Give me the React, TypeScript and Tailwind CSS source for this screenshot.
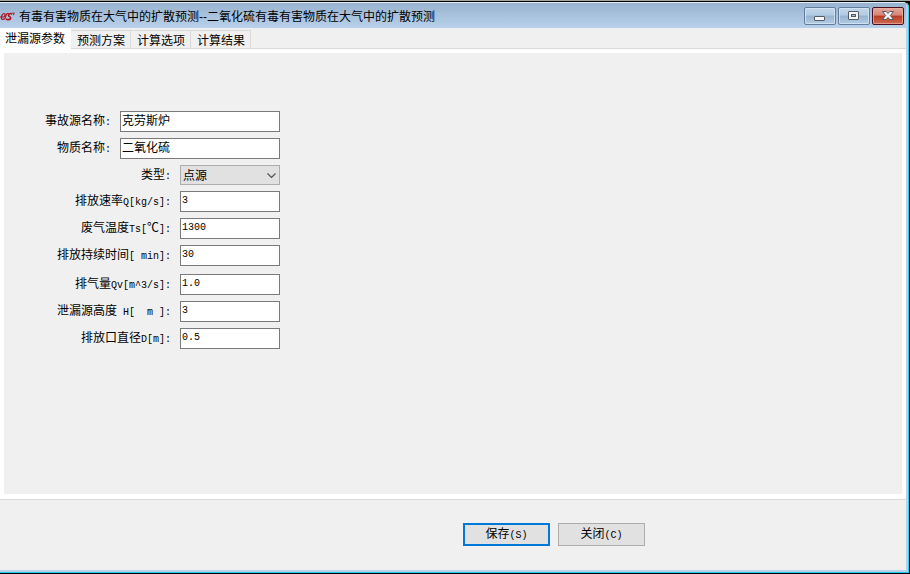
import React, { useState } from 'react';

const TITLE = '有毒有害物质在大气中的扩散预测--二氧化硫有毒有害物质在大气中的扩散预测';

const TABS = ['泄漏源参数', '预测方案', '计算选项', '计算结果'];

type Field = { id: string; label: string; value: string };

const NAME_FIELDS: Field[] = [
  { id: 'source', label: '事故源名称:', value: '克劳斯炉' },
  { id: 'substance', label: '物质名称:', value: '二氧化硫' },
];

const RATE_FIELDS: Field[] = [
  { id: 'rate', label: '排放速率Q[kg/s]:', value: '3' },
  { id: 'temperature', label: '废气温度Ts[℃]:', value: '1300' },
  { id: 'duration', label: '排放持续时间[ min]:', value: '30' },
];

const SIZE_FIELDS: Field[] = [
  { id: 'volume', label: '排气量Qv[m^3/s]:', value: '1.0' },
  { id: 'height', label: '泄漏源高度 H[  m ]:', value: '3' },
  { id: 'diameter', label: '排放口直径D[m]:', value: '0.5' },
];

// Latin runs are set smaller so that two of them fill one Chinese character
const MixedText: React.FC<{ text: string }> = ({ text }) => (
  <>
    {text.split(/([\x20-\x7e]+)/).map((part, i) =>
      i % 2 ? (
        <span key={i} className="font-['Liberation_Mono',monospace] text-[10px]">{part}</span>
      ) : (
        part
      )
    )}
  </>
);

const FieldRow: React.FC<{ field: Field; wide?: boolean }> = ({ field, wide }) => (
  <div className="flex h-[21px] items-start justify-end gap-[9px]">
    <label htmlFor={field.id} className="whitespace-pre leading-5">
      <MixedText text={field.label} />
    </label>
    <input
      id={field.id}
      type="text"
      defaultValue={field.value}
      className={`h-[21px] border border-[#7a7a7a] bg-white px-px outline-none ${
        wide ? 'w-40 pb-1 text-xs' : "w-[100px] pb-[3px] font-['Liberation_Mono','Noto_Sans_CJK_SC',monospace] text-[10px]"
      }`}
    />
  </div>
);

const Logo: React.FC = () => (
  <svg width="15" height="12" viewBox="0 0 15 12" fill="none" stroke="#b0141c" strokeWidth="1.2" aria-hidden="true">
    <path d="M0 6h3.500c1.500-.5 2.200-3.500.6-3.500C2.500 2.500 1 5.300 1.400 7.300c.4 1.600 2.400 1.200 3.600.2" />
    <path d="M4.800 7.800 6.200 3.800c.6-1 1.700-1.300 2.600-.8" />
    <path d="M12.200 3.200c-1.100-1.200-3.600-.6-3.700 1-.1 1.500 2.600 1.400 2.200 3-.4 1.700-3.500 1.900-4.700.7" strokeWidth="1.600" />
    <path d="M12.600 2h1.600l-.8 2.200" strokeWidth="1" />
  </svg>
);

const WindowButton: React.FC<{ name: string; close?: boolean; children: React.ReactNode }> = ({
  name,
  close,
  children,
}) => (
  <button
    type="button"
    aria-label={name}
    className={`flex h-[18px] w-8 items-center justify-center rounded-xs border ring-1 ring-inset ${
      close
        ? 'border-[#4b1020] bg-[linear-gradient(#e5a79d_0%,#d88375_45%,#b93a22_50%,#cf6a50_100%)] ring-[#eab2a8]/70'
        : 'border-[#637d9f] bg-[linear-gradient(#c2d6ea_0%,#b3cbe3_45%,#98b3cf_50%,#b3cde7_100%)] ring-[#dbe8f5]/70'
    }`}
  >
    {children}
  </button>
);

const TitleBar: React.FC = () => (
  <header className="flex h-[26px] shrink-0 items-start border-t border-[#e4edf6] bg-linear-to-b from-[#98b3d0] to-[#b9d1ea] pr-[2px]">
    <div className="flex flex-1 items-center gap-1 pt-1">
      <Logo />
      <h1 className="whitespace-nowrap leading-5">{TITLE}</h1>
    </div>
    <div className="flex gap-[2px] pt-1">
      <WindowButton name="最小化">
        <svg width="12" height="12" viewBox="0 0 12 12" aria-hidden="true">
          <rect x="0.500" y="6.500" width="10" height="4" rx="0.500" fill="#f6f6f6" stroke="#535a68" />
        </svg>
      </WindowButton>
      <WindowButton name="最大化">
        <svg width="12" height="12" viewBox="0 0 12 12" aria-hidden="true">
          <rect x="0.500" y="1.500" width="10" height="8" rx="0.500" fill="#f6f6f6" stroke="#535a68" />
          <rect x="3.500" y="4.500" width="4" height="2" fill="#9fb9d5" stroke="#535a68" />
        </svg>
      </WindowButton>
      <WindowButton name="关闭" close>
        <svg width="12" height="12" viewBox="0 0 12 12" aria-hidden="true">
          <path
            d="M.5 1.500h3.700L6 3.500l1.800-2h3.700L8.300 5.500l3.200 4H7.800L6 7.500l-1.800 2H.5l3.200-4z"
            fill="#f6f6f6"
            stroke="#535a68"
            strokeLinejoin="round"
          />
        </svg>
      </WindowButton>
    </div>
  </header>
);

const App: React.FC = () => {
  const [tab, setTab] = useState(0);

  return (
    <div className="flex min-h-screen flex-col border-t border-[#a3a7a3] bg-black pr-px pb-px font-['Liberation_Sans','Noto_Sans_CJK_SC',sans-serif] text-xs text-black">
      <div className="flex flex-1 flex-col overflow-hidden rounded-tr-md border-t border-r border-b border-t-black border-r-[#2fd0ea] border-b-[#1fc8e6] bg-[#b9d1ea] pr-[2px] pb-[2px]">
        <TitleBar />

        {/* Tabs */}
        <div role="tablist" className="flex h-[21px] shrink-0 border-b border-[#d9d9d9] bg-[#f0f0f0]">
          {TABS.map((name, i) => (
            <button
              key={name}
              type="button"
              role="tab"
              aria-selected={tab === i}
              onClick={() => setTab(i)}
              className={
                tab === i
                  ? '-mb-px bg-white pt-px pr-1.5 pl-[5px] leading-5'
                  : 'mt-[2px] border-t border-r border-[#d9d9d9] pt-[2px] pr-[5px] pl-1.5 leading-4'
              }
            >
              {name}
            </button>
          ))}
        </div>

        <main className="flex flex-1 flex-col bg-white pt-1 pr-1 pb-[5px] pl-1">
          <form className="flex-1 bg-[#f0f0f0] pt-[58px]">
            <div className="flex w-[276px] flex-col gap-2">
              <div className="flex flex-col gap-1.5">
                {NAME_FIELDS.map((field) => (
                  <FieldRow key={field.id} field={field} wide />
                ))}
                <div className="flex h-5 items-start justify-end gap-[9px]">
                  <label htmlFor="kind" className="leading-5">
                    <MixedText text="类型:" />
                  </label>
                  <div className="relative">
                    <select
                      id="kind"
                      className="block h-5 w-[100px] appearance-none border border-[#adadad] bg-[#e1e1e1] px-[2px] pt-px outline-none"
                    >
                      <option>点源</option>
                    </select>
                    <svg
                      className="pointer-events-none absolute top-2 right-1"
                      width="9"
                      height="6"
                      viewBox="0 0 9 6"
                      fill="none"
                      stroke="#505050"
                      strokeWidth="1.2"
                      aria-hidden="true"
                    >
                      <path d="M.5.5l4 4 4-4" />
                    </svg>
                  </div>
                </div>
                {RATE_FIELDS.map((field) => (
                  <FieldRow key={field.id} field={field} />
                ))}
              </div>
              <div className="flex flex-col gap-1.5">
                {SIZE_FIELDS.map((field) => (
                  <FieldRow key={field.id} field={field} />
                ))}
              </div>
            </div>
          </form>
        </main>

        {/* Actions */}
        <footer className="flex gap-2 border-t border-[#d9d9d9] bg-[#f0f0f0] pt-[23px] pb-6 pl-[463px]">
          <button type="button" className="h-[23px] w-[87px] border-2 border-[#0078d7] bg-[#e1e1e1] leading-[18px]">
            <MixedText text="保存(S)" />
          </button>
          <button type="button" className="h-[23px] w-[87px] border border-[#adadad] bg-[#e1e1e1] leading-[18px]">
            <MixedText text="关闭(C)" />
          </button>
        </footer>
      </div>
    </div>
  );
};

export default App;
